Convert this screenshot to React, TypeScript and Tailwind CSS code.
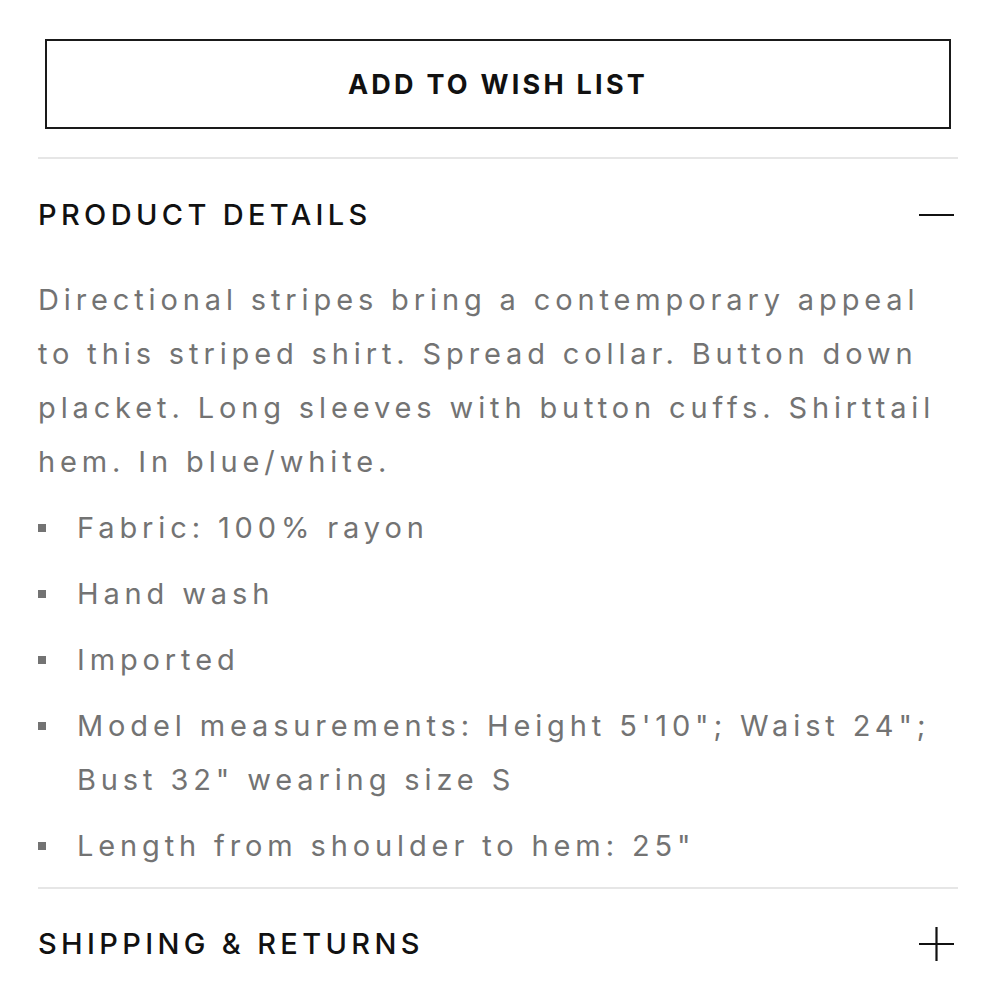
import React from 'react';

const bullets = [
  'Fabric: 100% rayon',
  'Hand wash',
  'Imported',
  'Model measurements: Height 5\'10"; Waist 24"; Bust 32" wearing size S',
  'Length from shoulder to hem: 25"',
];

const MinusIcon = () => (
  <svg width="35" height="36" viewBox="0 0 35 36" fill="none" stroke="#111" strokeWidth="2.2">
    <path d="M0 18 H35" />
  </svg>
);

const PlusIcon = () => (
  <svg width="35" height="36" viewBox="0 0 35 36" fill="none" stroke="#111" strokeWidth="2.2">
    <path d="M0 18 H35 M17.5 1 V35" />
  </svg>
);

export default function App() {
  return (
    <div className="w-[1000px] h-[1000px] overflow-hidden bg-white pl-[38px] pr-[42px] pt-[39px] font-['Inter',sans-serif]">
      {/* Wish list button */}
      <div className="px-[7px]">
        <button className="w-full h-[90px] pt-[3px] border-2 border-[#1a1a1a] flex items-center justify-center text-[27px] font-bold tracking-[0.12em] text-[#111]">
          ADD TO WISH LIST
        </button>
      </div>

      <div className="mt-[28px] h-[2px] bg-[#e6e6e6]" />

      {/* Product details */}
      <div className="h-[112px] flex items-center justify-between">
        <span className="text-[29px] font-medium tracking-[0.15em] text-[#111]">PRODUCT DETAILS</span>
        <span className="mr-[4px]"><MinusIcon /></span>
      </div>

      <div className="pt-[2px] text-[29px] leading-[54px] tracking-[0.168em] text-[#737373]">
        <p>
          Directional stripes bring a contemporary appeal to this striped shirt. Spread collar. Button down placket. Long sleeves with button cuffs. Shirttail hem. In blue/white.
        </p>
        <ul className="mt-[12px] flex flex-col gap-[12px]">
          {bullets.map((b) => (
            <li key={b} className="flex">
              <span className="w-[39px] shrink-0 flex items-start pt-[23px]">
                <span className="w-[8px] h-[8px] bg-[#737373]" />
              </span>
              <span>{b}</span>
            </li>
          ))}
        </ul>
      </div>

      <div className="mt-[14px] h-[2px] bg-[#e6e6e6]" />

      {/* Shipping & returns */}
      <div className="h-[110px] flex items-center justify-between">
        <span className="text-[29px] font-medium tracking-[0.15em] text-[#111]">SHIPPING &amp; RETURNS</span>
        <span className="mr-[4px]"><PlusIcon /></span>
      </div>
    </div>
  );
}
